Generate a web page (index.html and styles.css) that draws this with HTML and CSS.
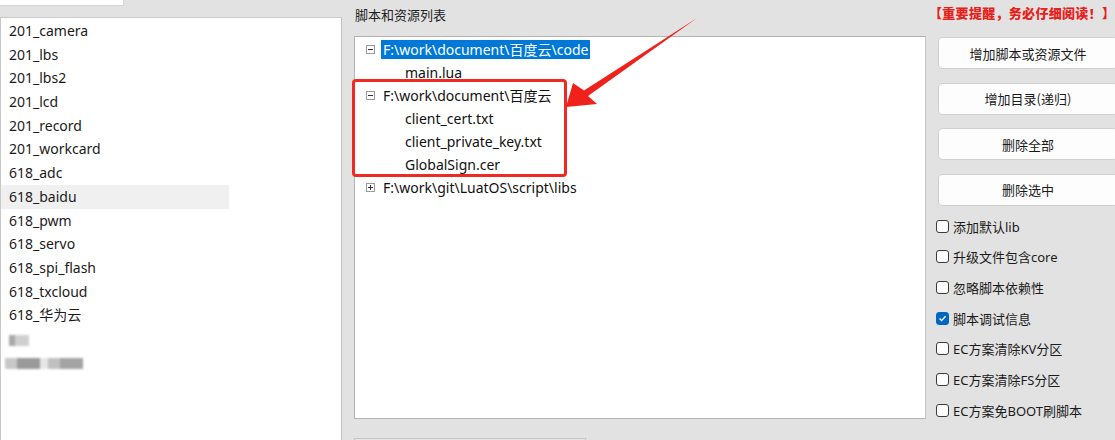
FILE: index.html
```html
<!DOCTYPE html>
<html lang="zh-CN">
<head>
    <meta charset="UTF-8">
    <title>脚本和资源列表</title>
    <link rel="stylesheet" href="styles.css">
</head>
<body>
    <div class="janela">
        <!-- Coluna da esquerda: lista de demos -->
        <div class="col-esquerda">
            <div class="busca"></div>
            <ul class="lista-demos">
                <li>201_camera</li>
                <li>201_lbs</li>
                <li>201_lbs2</li>
                <li>201_lcd</li>
                <li>201_record</li>
                <li>201_workcard</li>
                <li>618_adc</li>
                <li class="ativo">618_baidu</li>
                <li>618_pwm</li>
                <li>618_servo</li>
                <li>618_spi_flash</li>
                <li>618_txcloud</li>
                <li>618_华为云</li>
                <li class="borrado"><span class="borrao-a"></span></li>
                <li class="borrado"><span class="borrao-b"></span></li>
            </ul>
        </div>

        <!-- Coluna principal -->
        <div class="col-principal">
            <div class="principal-topo">
                <div class="col-arvore">
                    <div class="titulo-grupo">脚本和资源列表</div>
                    <div class="arvore">
                        <div class="linha raiz"><span class="expansor menos"></span><span class="selecionado">F:\work\document\百度云\code</span></div>
                        <div class="linha filho">main.lua</div>
                        <div class="linha raiz"><span class="expansor menos"></span><span>F:\work\document\百度云</span></div>
                        <div class="linha filho">client_cert.txt</div>
                        <div class="linha filho">client_private_key.txt</div>
                        <div class="linha filho">GlobalSign.cer</div>
                        <div class="linha raiz"><span class="expansor mais"></span><span>F:\work\git\LuatOS\script\libs</span></div>
                    </div>
                </div>

                <div class="col-lateral">
                    <div class="aviso">【重要提醒，务必仔细阅读！】</div>
                    <button class="botao">增加脚本或资源文件</button>
                    <button class="botao">增加目录(递归)</button>
                    <button class="botao">删除全部</button>
                    <button class="botao">删除选中</button>

                    <div class="opcoes">
                        <label class="opcao"><span class="caixa"></span>添加默认lib</label>
                        <label class="opcao"><span class="caixa"></span>升级文件包含core</label>
                        <label class="opcao"><span class="caixa"></span>忽略脚本依赖性</label>
                        <label class="opcao"><span class="caixa marcada"><svg width="9" height="9" viewBox="0 0 9 9"><path d="M1.5 4.6 L3.6 6.6 L7.6 2.2" fill="none" stroke="#fff" stroke-width="1.4"/></svg></span>脚本调试信息</label>
                        <label class="opcao"><span class="caixa"></span>EC方案清除KV分区</label>
                        <label class="opcao"><span class="caixa"></span>EC方案清除FS分区</label>
                        <label class="opcao"><span class="caixa"></span>EC方案免BOOT刷脚本</label>
                    </div>
                </div>
            </div>

            <div class="principal-rodape">
                <div class="caixa-caminho"></div>
                <button class="botao-rodape b1"></button>
                <button class="botao-rodape b2"></button>
                <button class="botao-rodape b3"></button>
            </div>
        </div>

        <!-- Marcação vermelha por cima da tela -->
        <div class="destaque"></div>
        <svg class="seta" width="1115" height="440" viewBox="0 0 1115 440">
            <polygon points="697,18 588,96 597,104 566,107 573,83 584,90.5" fill="#f0201a"/>
        </svg>
    </div>
</body>
</html>
```

FILE: styles.css
```css
/* Estilos globais */
body {
    margin: 0;
    font-family: "Noto Sans", "Noto Sans CJK SC", sans-serif;
    background-color: #e2e2e2;
    overflow: hidden;
}

.janela {
    position: relative;
    display: flex;
    width: 1115px;
    height: 440px;
    overflow: hidden;
}

/* Coluna da esquerda */
.col-esquerda {
    width: 342px;
    flex-shrink: 0;
}

.busca {
    width: 123px;
    height: 5px;
    background-color: #fff;
    border-right: 1px solid #d4d4d4;
    border-bottom: 1px solid #d4d4d4;
    margin-bottom: 11px;
}

.lista-demos {
    list-style: none;
    margin: 0;
    padding: 1px 0 0 0;
    height: 440px;
    background-color: #fff;
    border-top: 1px solid #c9c9c9;
    border-left: 1px solid #c9c9c9;
    border-right: 1px solid #c2c2c2;
}

.lista-demos li {
    width: 220px;
    height: 23.7px;
    line-height: 23.7px;
    padding-left: 8px;
    font-size: 14px;
    color: #1b1b1b;
}

.lista-demos li.ativo {
    background-color: #f0f0f0;
}

.lista-demos li.borrado span {
    display: inline-block;
    height: 11px;
    vertical-align: middle;
    filter: blur(1.2px);
}

.borrao-a {
    width: 20px;
    background: linear-gradient(90deg, #a9a9a9 0 30%, #d0d0d0 30% 100%);
}

.borrao-b {
    width: 78px;
    margin-left: -4px;
    background: linear-gradient(90deg, #c8c8c8 0 15%, #9a9a9a 15% 45%, #e6e6e6 45% 55%, #c0c0c0 55% 70%, #a4a4a4 70% 100%);
}

/* Coluna principal */
.col-principal {
    margin-left: 12px;
    display: flex;
    flex-direction: column;
}

.principal-topo {
    display: flex;
}

.col-arvore {
    width: 572px;
}

.titulo-grupo {
    height: 36px;
    line-height: 30px;
    padding-left: 1px;
    font-size: 13px;
    color: #222;
}

.arvore {
    height: 380px;
    background-color: #fff;
    border: 1px solid #b3b3b3;
    border-right-color: #c6c6c6;
    padding-top: 1px;
    box-sizing: content-box;
}

.linha {
    height: 23px;
    display: flex;
    align-items: center;
    font-size: 14px;
    color: #111;
    white-space: nowrap;
}

.linha.raiz {
    padding-left: 11px;
}

.linha.raiz span:last-child {
    padding: 0 2px;
    line-height: 19px;
}

.linha.filho {
    padding-left: 50px;
}

.selecionado {
    background-color: #0078d7;
    color: #fff;
}

.expansor {
    position: relative;
    width: 7px;
    height: 7px;
    border: 1px solid #9a9a9a;
    margin-right: 6px;
}

.expansor::before {
    content: "";
    position: absolute;
    left: 1px;
    top: 3px;
    width: 5px;
    height: 1px;
    background-color: #333;
}

.expansor.mais::after {
    content: "";
    position: absolute;
    left: 3px;
    top: 1px;
    width: 1px;
    height: 5px;
    background-color: #333;
}

/* Coluna lateral */
.col-lateral {
    width: 180px;
    margin-left: 10px;
    flex-shrink: 0;
}

.aviso {
    height: 37px;
    line-height: 26px;
    margin-left: -7px;
    font-size: 13px;
    font-weight: 900;
    letter-spacing: 0.3px;
    color: #e8201a;
    white-space: nowrap;
}

.botao {
    display: block;
    width: 180px;
    height: 32px;
    margin: 0 0 13.5px 2px;
    background-color: #fdfdfd;
    border: 1px solid #d0d0d0;
    border-radius: 4px;
    font-family: "Noto Sans CJK SC", sans-serif;
    font-size: 13px;
    color: #1b1b1b;
}

.opcoes {
    margin-top: -8px;
}

.opcao {
    display: flex;
    align-items: center;
    height: 30.67px;
    font-size: 13px;
    color: #1b1b1b;
    white-space: nowrap;
}

.caixa {
    width: 11px;
    height: 11px;
    border: 1px solid #3b3b3b;
    border-radius: 3px;
    margin-right: 4px;
    background-color: #fff;
    display: flex;
    align-items: center;
    justify-content: center;
}

.caixa.marcada {
    background-color: #0067c0;
    border-color: #0067c0;
}

/* Rodapé */
.principal-rodape {
    display: flex;
    margin-top: 12px;
}

.caixa-caminho {
    width: 230px;
    height: 30px;
    background-color: #e6e6e6;
    border: 1px solid #c6c6c6;
}

.botao-rodape {
    height: 30px;
    margin-top: 6px;
    background-color: #fdfdfd;
    border: 1px solid #cfcfcf;
    border-radius: 4px;
}

.b1 { width: 98px; margin-left: 195px; }
.b2 { width: 115px; margin-left: 12px; }
.b3 { width: 100px; margin-left: 16px; }

/* Marcação vermelha */
.destaque {
    position: absolute;
    left: 352px;
    top: 79px;
    width: 209px;
    height: 92px;
    border: 3px solid #ee2a22;
    border-radius: 4px;
}

.seta {
    position: absolute;
    left: 0;
    top: 0;
    pointer-events: none;
}
```
